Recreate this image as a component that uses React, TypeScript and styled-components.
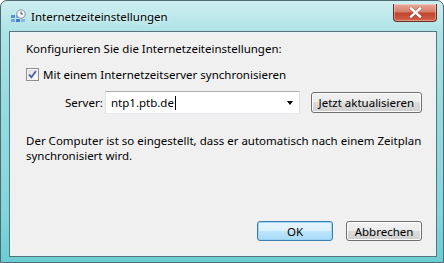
import styled, { createGlobalStyle } from "styled-components";

const Global = createGlobalStyle`
  html, body {
    margin: 0;
    padding: 0;
    background: #ffffff;
  }
  body {
    font-family: "Noto Sans", "Open Sans", sans-serif;
    font-size: 11.5px;
    color: #000;
  }
`;

const Window = styled.div`
  width: 444px;
  height: 263px;
  box-sizing: border-box;
  display: flex;
  flex-direction: column;
  border: 1px solid #4f6a70;
  border-radius: 7px 7px 0 0;
  background: linear-gradient(
    180deg,
    #cdeef0 0%,
    #ade3e6 12%,
    #96dbdf 40%,
    #84d6db 80%,
    #6bcdd3 100%
  );
  overflow: hidden;
`;

const TitleBar = styled.div`
  height: 30px;
  display: flex;
  align-items: flex-start;
  padding-left: 9px;
`;

const TitleIcon = styled.svg`
  width: 16px;
  height: 16px;
  margin-top: 8px;
  flex: none;
`;

const TitleText = styled.span`
  margin: 8px 0 0 5px;
  color: #000;
  flex: 1;
  text-shadow: 0 0 6px rgba(255, 255, 255, 0.9);
`;

const CloseBtn = styled.div`
  width: 44px;
  height: 18px;
  margin: 3px 6px 0 0;
  box-sizing: border-box;
  border: 1px solid #6b2d22;
  border-top: none;
  border-radius: 0 0 4px 4px;
  background: linear-gradient(180deg, #e9a99b 0%, #d77f6b 45%, #c2442c 55%, #d0634a 100%);
  box-shadow: inset 0 0 0 1px rgba(255, 255, 255, 0.35);
  display: flex;
  align-items: center;
  justify-content: center;
`;

const Client = styled.div`
  flex: 1;
  margin: 0 6px 5px 8px;
  border: 1px solid #56757b;
  box-shadow: inset 0 0 0 1px #e8f4f5;
  background: #f0f0f0;
  display: flex;
  flex-direction: column;
  padding: 9px 14px 0 16px;
`;

const Text = styled.div`
  line-height: 15px;
  color: #000;
`;

const CheckRow = styled.label`
  display: flex;
  align-items: center;
  gap: 4px;
  margin-top: 11px;
  height: 15px;
`;

const CheckBox = styled.span`
  width: 13px;
  height: 13px;
  box-sizing: border-box;
  border: 1px solid #8e8f8f;
  background: linear-gradient(135deg, #dcdcdc 0%, #f6f6f6 70%, #ffffff 100%);
  box-shadow: inset 0 0 0 1px #f4f4f4;
  display: flex;
  align-items: center;
  justify-content: center;
  flex: none;
`;

const ServerRow = styled.div`
  display: flex;
  align-items: center;
  margin-top: 9px;
  padding-left: 39px;
`;

const Label = styled.span`
  width: 40px;
  flex: none;
`;

const Combo = styled.div`
  width: 196px;
  height: 23px;
  box-sizing: border-box;
  border: 1px solid #abadb3;
  border-color: #abadb3 #dbdfe6 #e3e9ef #e2e3ea;
  background: #ffffff;
  display: flex;
  align-items: center;
  padding: 0 6px 0 5px;
`;

const ComboValue = styled.span`
  flex: 1;
  display: flex;
  align-items: center;
`;

const Caret = styled.span`
  width: 1px;
  height: 14px;
  background: #000;
  margin-left: 1px;
`;

const Arrow = styled.span`
  width: 0;
  height: 0;
  border-left: 3.5px solid transparent;
  border-right: 3.5px solid transparent;
  border-top: 4px solid #000;
`;

const Button = styled.div<{ $default?: boolean }>`
  height: 21px;
  box-sizing: border-box;
  border: 1px solid ${(p) => (p.$default ? "#3c7fb1" : "#707070")};
  border-radius: 3px;
  background: ${(p) =>
    p.$default
      ? "linear-gradient(180deg, #eaf6fd 0%, #d9f0fc 50%, #bee6fd 50%, #a7d9f5 100%)"
      : "linear-gradient(180deg, #f2f2f2 0%, #ebebeb 50%, #dddddd 50%, #cfcfcf 100%)"};
  box-shadow: inset 0 0 0 1px ${(p) => (p.$default ? "#9cd5f3" : "#fcfcfc")};
  display: flex;
  align-items: center;
  justify-content: center;
  white-space: nowrap;
  padding: 0 6px;
`;

const UpdateBtn = styled(Button)`
  margin-left: 11px;
  width: 112px;
`;

const Paragraph = styled(Text)`
  margin-top: 19px;
  width: 406px;
`;

const Footer = styled.div`
  margin-top: auto;
  margin-bottom: 15px;
  display: flex;
  justify-content: flex-end;
  gap: 13px;
`;

const DialogBtn = styled(Button)`
  width: 76px;
  height: 20px;
`;

export default function App() {
  return (
    <>
      <Global />
      <Window>
        <TitleBar>
          <TitleIcon viewBox="0 0 16 16">
            <rect x="1" y="6" width="4" height="3" fill="#5b8fd3" />
            <rect x="6" y="6" width="4" height="3" fill="#7aa7e0" />
            <rect x="1" y="10" width="4" height="3" fill="#7aa7e0" />
            <rect x="6" y="10" width="4" height="3" fill="#4a7dc4" />
            <rect x="11" y="10" width="4" height="3" fill="#8db4e6" />
            <circle cx="11" cy="5" r="4.2" fill="#f4f6f8" stroke="#7d8a99" strokeWidth="0.9" />
            <path d="M11 2.4V5h2" stroke="#333c48" strokeWidth="0.9" fill="none" />
          </TitleIcon>
          <TitleText>Internetzeiteinstellungen</TitleText>
          <CloseBtn>
            <svg width="13" height="11" viewBox="0 0 13 11">
              <path
                d="M2 1.5L11 9.5M11 1.5L2 9.5"
                stroke="#3d1a14"
                strokeWidth="3.6"
                strokeLinecap="square"
                opacity="0.35"
              />
              <path
                d="M2 1.5L11 9.5M11 1.5L2 9.5"
                stroke="#ffffff"
                strokeWidth="2.4"
                strokeLinecap="square"
              />
            </svg>
          </CloseBtn>
        </TitleBar>
        <Client>
          <Text>Konfigurieren Sie die Internetzeiteinstellungen:</Text>
          <CheckRow>
            <CheckBox>
              <svg width="9" height="9" viewBox="0 0 9 9">
                <path
                  d="M1 4.5L3.4 7.2L8 1"
                  stroke="#4d61a0"
                  strokeWidth="1.8"
                  fill="none"
                />
              </svg>
            </CheckBox>
            <span>Mit einem Internetzeitserver synchronisieren</span>
          </CheckRow>
          <ServerRow>
            <Label>Server:</Label>
            <Combo>
              <ComboValue>
                ntp1.ptb.de
                <Caret />
              </ComboValue>
              <Arrow />
            </Combo>
            <UpdateBtn>Jetzt aktualisieren</UpdateBtn>
          </ServerRow>
          <Paragraph>
            Der Computer ist so eingestellt, dass er automatisch nach einem Zeitplan
            synchronisiert wird.
          </Paragraph>
          <Footer>
            <DialogBtn $default>OK</DialogBtn>
            <DialogBtn>Abbrechen</DialogBtn>
          </Footer>
        </Client>
      </Window>
    </>
  );
}
